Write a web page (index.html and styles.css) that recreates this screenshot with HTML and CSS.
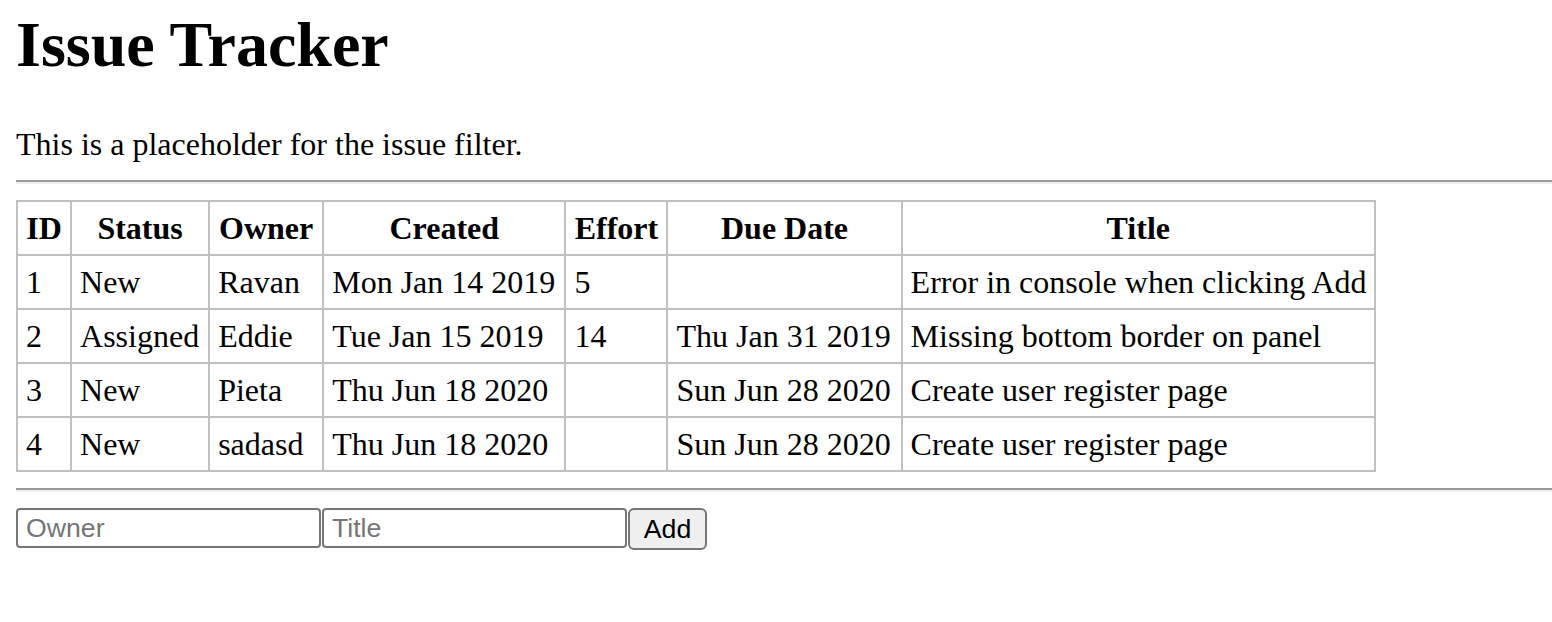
FILE: index.html
```html
<!DOCTYPE html>
<html lang="en">
<head>
<meta charset="utf-8">
<title>Issue Tracker</title>
<link rel="stylesheet" href="styles.css">
</head>
<body>
<h1 class="page-title">Issue Tracker</h1>
<p class="filter">This is a placeholder for the issue filter.</p>
<hr class="rule">
<table class="issues">
  <thead>
    <tr>
      <th class="c-id">ID</th>
      <th class="c-status">Status</th>
      <th class="c-owner">Owner</th>
      <th class="c-created">Created</th>
      <th class="c-effort">Effort</th>
      <th class="c-due">Due Date</th>
      <th class="c-title">Title</th>
    </tr>
  </thead>
  <tbody>
    <tr><td>1</td><td>New</td><td>Ravan</td><td>Mon Jan 14 2019</td><td>5</td><td></td><td>Error in console when clicking Add</td></tr>
    <tr><td>2</td><td>Assigned</td><td>Eddie</td><td>Tue Jan 15 2019</td><td>14</td><td>Thu Jan 31 2019</td><td>Missing bottom border on panel</td></tr>
    <tr><td>3</td><td>New</td><td>Pieta</td><td>Thu Jun 18 2020</td><td></td><td>Sun Jun 28 2020</td><td>Create user register page</td></tr>
    <tr><td>4</td><td>New</td><td>sadasd</td><td>Thu Jun 18 2020</td><td></td><td>Sun Jun 28 2020</td><td>Create user register page</td></tr>
  </tbody>
</table>
<hr class="rule rule-bottom">
<form class="add-form">
  <input class="field" type="text" name="owner" placeholder="Owner"><input class="field" type="text" name="title" placeholder="Title"><button class="add-btn" type="button">Add</button>
</form>
</body>
</html>
```
FILE: styles.css
```css
html, body {
  background: #ffffff;
}
body {
  margin: 8px 0 0 16px;
  font-family: "Liberation Serif", "Times New Roman", serif;
  font-size: 32px;
  color: #000000;
}
.page-title {
  margin: 0 0 44px 0;
  font-size: 64px;
  line-height: 74px;
  font-weight: bold;
}
.filter {
  margin: 0;
  line-height: 37px;
}
.rule {
  margin: 17px 0 16px 0;
  height: 0;
  border: none;
  border-top: 2px solid #9a9a9a;
  border-bottom: 2px solid #eeeeee;
}
.rule-bottom {
  margin-top: 16px;
}
.issues {
  border-collapse: collapse;
  table-layout: fixed;
  width: 1360px;
}
.issues th,
.issues td {
  border: 2px solid #c0c0c0;
  padding: 8px;
  line-height: 36px;
  white-space: nowrap;
  overflow: visible;
}
.issues th {
  text-align: center;
  font-weight: bold;
}
.issues td {
  text-align: left;
}
.c-id { width: 36px; }
.c-status { width: 120px; }
.c-owner { width: 96px; }
.c-created { width: 224px; }
.c-effort { width: 84px; }
.c-due { width: 216px; }
.c-title { width: 455px; }
.add-form {
  display: flex;
  align-items: flex-start;
  gap: 1px;
  margin: 0;
}
.field {
  box-sizing: border-box;
  width: 305px;
  height: 40px;
  margin: 0;
  padding: 0 8px;
  border: 2px solid #767676;
  border-radius: 4px;
  font-family: "Liberation Sans", Arial, sans-serif;
  font-size: 26.67px;
  color: #000000;
  background: #ffffff;
}
.field::placeholder {
  color: #757575;
}
.add-btn {
  box-sizing: border-box;
  width: 79px;
  height: 42px;
  margin: 0;
  padding: 0;
  border: 2px solid #767676;
  border-radius: 6px;
  background: #efefef;
  font-family: "Liberation Sans", Arial, sans-serif;
  font-size: 26.67px;
  color: #000000;
}
```
